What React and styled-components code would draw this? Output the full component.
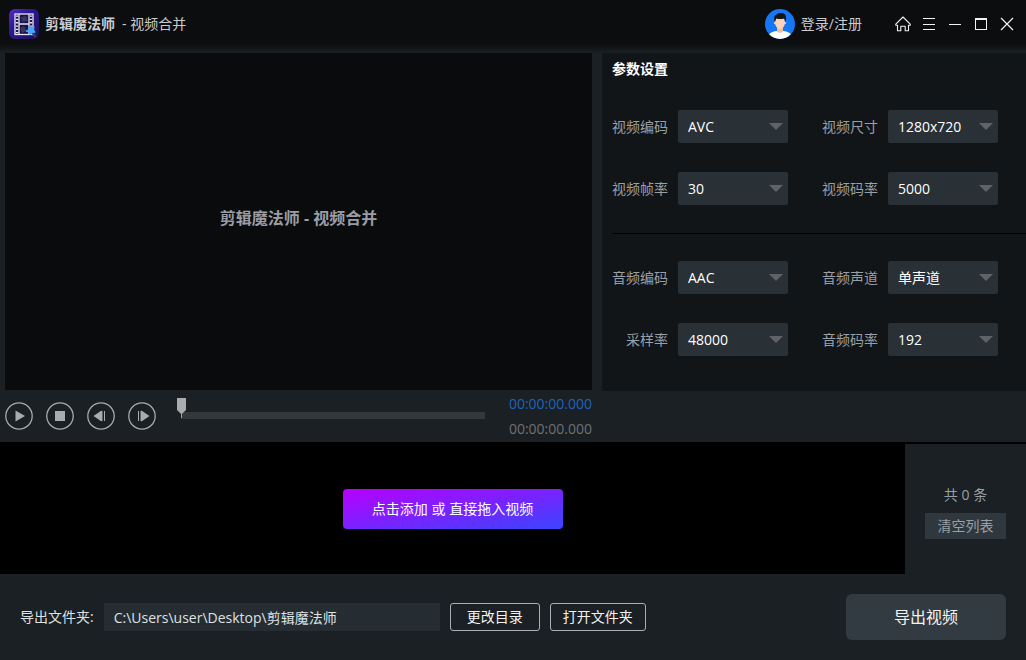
import React, { useId } from 'react';
import styled, { createGlobalStyle } from 'styled-components';

const VIDEO_FIELDS = [
  { label: '视频编码', options: ['AVC', 'HEVC'] },
  { label: '视频尺寸', options: ['1280x720', '1920x1080'] },
  { label: '视频帧率', options: ['30', '25', '60'] },
  { label: '视频码率', options: ['5000', '8000'] },
];

const AUDIO_FIELDS = [
  { label: '音频编码', options: ['AAC', 'MP3'] },
  { label: '音频声道', options: ['单声道', '立体声'] },
  { label: '采样率', options: ['48000', '44100'] },
  { label: '音频码率', options: ['192', '128'] },
];

function Field({ label, options }) {
  const id = useId();

  return (
    <>
      <FieldLabel htmlFor={id}>{label}</FieldLabel>
      <SelectBox>
        <Select id={id}>
          {options.map((option) => (
            <option key={option}>{option}</option>
          ))}
        </Select>
      </SelectBox>
    </>
  );
}

function Logo() {
  return (
    <svg width='30' height='30' viewBox='0 0 30 30' aria-hidden='true'>
      <defs>
        <linearGradient id='logo-bg' x1='0' y1='0' x2='1' y2='1'>
          <stop offset='0' stopColor='#5a2cc4' />
          <stop offset='0.35' stopColor='#2e1a96' />
          <stop offset='1' stopColor='#1a1152' />
        </linearGradient>
      </defs>
      <rect width='30' height='30' rx='6' fill='url(#logo-bg)' />
      <rect x='6' y='5' width='18' height='20.500' fill='#17134a' stroke='#e6e3f2' strokeWidth='1.300' />
      <path d='M10 5v20.500M20 5v20.500M10 15h10' stroke='#e6e3f2' strokeWidth='1.300' fill='none' />
      <path d='M8 6.500v18M22 6.500v18' stroke='#e6e3f2' strokeWidth='2.600' strokeDasharray='1.300 2' />
      <path d='M12 8l5-1 2 5-6 1zM11 19l4-2 3 5-5 2z' fill='#3b3557' />
      <path d='M23 23l3.500 5' stroke='#3b3f6b' strokeWidth='2.200' />
      <path d='M20.500 17l1.500 1.800 3.200-1-.6 3 1.600 2.400-3.200.2-1.800 2.400-1.200-2.800-3-.7 2.500-1.800z' fill='#4ea4fb' stroke='#4ea4fb' strokeLinejoin='round' />
    </svg>
  );
}

function Avatar() {
  return (
    <svg width='30' height='30' viewBox='0 0 30 30' aria-hidden='true'>
      <defs>
        <clipPath id='avatar-clip'>
          <circle cx='15' cy='15' r='15' />
        </clipPath>
      </defs>
      <g clipPath='url(#avatar-clip)'>
        <rect width='30' height='30' fill='#1677f5' />
        <path d='M2 30c1-5 4-7.500 10-8h6c6 .5 9 3 10 8z' fill='#fff' />
        <path d='M12 18h6v4.500c-1.500 1.800-4.500 1.800-6 0z' fill='#f0bfa2' />
        <ellipse cx='15' cy='13.500' rx='5' ry='6.500' fill='#fbd3ba' />
        <circle cx='9.800' cy='14' r='1' fill='#fbd3ba' />
        <circle cx='20.200' cy='14' r='1' fill='#fbd3ba' />
        <path d='M9.800 13c-1.500-5 0-7 2-7.500 2-2 7-2 8.500.5 1.500 1.500.8 4.500-.1 7l-.9-3.500c-3 .8-6 .6-8 0z' fill='#151515' />
      </g>
    </svg>
  );
}

function WindowIcon({ children }) {
  return (
    <svg width='16' height='16' viewBox='0 0 16 16' fill='none' stroke='currentColor' aria-hidden='true'>
      {children}
    </svg>
  );
}

function PlayerButton({ label, children }) {
  return (
    <RoundButton aria-label={label}>
      <svg width='28' height='28' viewBox='0 0 28 28' fill='#a9abac' aria-hidden='true'>
        <circle cx='14' cy='14' r='13.200' fill='none' stroke='#a9abac' strokeWidth='1.300' />
        {children}
      </svg>
    </RoundButton>
  );
}

function App() {
  return (
    <Page>
      <GlobalStyle />
      <TitleBar>
        <Logo />
        <AppTitle>
          <strong>剪辑魔法师</strong>
          <span>- 视频合并</span>
        </AppTitle>
        <LoginButton>
          <Avatar />
          登录/注册
        </LoginButton>
        <WindowButtons>
          <WindowButton aria-label='主页'>
            <WindowIcon>
              <path
                d='M.8 8.200L8 1l7.200 7.200v1h-1.700v5.600h-3.300v-4.600h-4.400v4.600H2.500V9.200H.8z'
                strokeWidth='1.100'
                strokeLinejoin='round'
              />
            </WindowIcon>
          </WindowButton>
          <WindowButton aria-label='菜单'>
            <WindowIcon>
              <path d='M2 2.500h12M2 8.500h12M2 13.500h12' />
            </WindowIcon>
          </WindowButton>
          <WindowButton aria-label='最小化'>
            <WindowIcon>
              <path d='M2 8.500h12' />
            </WindowIcon>
          </WindowButton>
          <WindowButton aria-label='最大化'>
            <WindowIcon>
              <path d='M2.500 3v11M13.500 3v11M2 13.500h12' />
              <path d='M2 3h12' strokeWidth='2' />
            </WindowIcon>
          </WindowButton>
          <WindowButton aria-label='关闭'>
            <WindowIcon>
              <path d='M2 2l12 12M14 2L2 14' strokeWidth='1.200' />
            </WindowIcon>
          </WindowButton>
        </WindowButtons>
      </TitleBar>

      <Workspace>
        <PreviewColumn>
          <Preview>剪辑魔法师 - 视频合并</Preview>
          <Player>
            <PlayerButtons>
              <PlayerButton label='播放'>
                <path d='M10.500 8.500l9.500 5.500-9.500 5.500z' />
              </PlayerButton>
              <PlayerButton label='停止'>
                <rect x='9' y='9' width='10' height='10' />
              </PlayerButton>
              <PlayerButton label='上一帧'>
                <path d='M6.500 14l8-5.500v11zM14.500 9h1v10h-1zM17 9h1v10h-1z' />
              </PlayerButton>
              <PlayerButton label='下一帧'>
                <path d='M21.500 14l-8-5.500v11zM12.500 9h1v10h-1zM10 9h1v10h-1z' />
              </PlayerButton>
            </PlayerButtons>
            <Seek type='range' min='0' max='100' defaultValue='0' aria-label='播放进度' />
            <Times>
              <Time $active>00:00:00.000</Time>
              <Time>00:00:00.000</Time>
            </Times>
          </Player>
        </PreviewColumn>
        <Settings>
          <SettingsTitle>参数设置</SettingsTitle>
          <FieldGrid>
            {VIDEO_FIELDS.map((field) => (
              <Field key={field.label} {...field} />
            ))}
          </FieldGrid>
          <Divider />
          <FieldGrid>
            {AUDIO_FIELDS.map((field) => (
              <Field key={field.label} {...field} />
            ))}
          </FieldGrid>
        </Settings>
      </Workspace>

      <ListRow>
        <DropZone>
          <AddButton>点击添加 或 直接拖入视频</AddButton>
        </DropZone>
        <ListSide>
          <span>共 0 条</span>
          <ClearButton>清空列表</ClearButton>
        </ListSide>
      </ListRow>

      <Footer>
        <label htmlFor='export-folder'>导出文件夹:</label>
        <PathInput id='export-folder' type='text' defaultValue='C:\Users\user\Desktop\剪辑魔法师' />
        <OutlineButton>更改目录</OutlineButton>
        <OutlineButton>打开文件夹</OutlineButton>
        <ExportButton>导出视频</ExportButton>
      </Footer>
    </Page>
  );
}

const GlobalStyle = createGlobalStyle`
  * {
    box-sizing: border-box;
  }

  body {
    margin: 0;
    background: #1a2023;
  }

  body, button, input, select {
    font-family: 'Open Sans', 'Noto Sans CJK SC', sans-serif;
    font-size: 14px;
    line-height: 20px;
  }

  button {
    padding: 0;
    border: none;
    background: none;
    color: inherit;
    cursor: pointer;
  }

  svg {
    display: block;
  }
`;

const Page = styled.div`
  display: flex;
  flex-direction: column;
  min-height: 100vh;
  background: #1a2023;
  color: #dfe1e3;
`;

const TitleBar = styled.header`
  display: flex;
  align-items: center;
  height: 53px;
  padding: 0 6px 5px 9px;
  background: linear-gradient(#0b0d0f 44px, #1a2023 53px);
`;

const AppTitle = styled.div`
  display: flex;
  gap: 7px;
  margin-left: 6px;
  color: #c9cccf;
`;

const LoginButton = styled.button`
  display: flex;
  align-items: center;
  gap: 6px;
  margin-left: auto;
  color: #c9cccf;
`;

const WindowButtons = styled.div`
  display: flex;
  margin-left: 28px;
`;

const WindowButton = styled.button`
  display: flex;
  align-items: center;
  justify-content: center;
  width: 26px;
  height: 26px;
  color: #f2f2f2;

  &:hover {
    background: #293036;
  }
`;

const Workspace = styled.main`
  display: flex;
  flex: 1;
  gap: 10px;
`;

const PreviewColumn = styled.section`
  display: flex;
  flex: 1;
  flex-direction: column;
  padding-left: 5px;
`;

const Preview = styled.div`
  display: flex;
  flex: 1;
  align-items: center;
  justify-content: center;
  padding-bottom: 8px;
  background: #0a0b0c;
  color: #9a9da6;
  font-size: 16px;
  font-weight: bold;
`;

const Player = styled.div`
  display: flex;
  align-items: center;
  height: 52px;
`;

const PlayerButtons = styled.div`
  display: flex;
  gap: 13px;
`;

const RoundButton = styled.button`
  width: 28px;
  height: 28px;
  border-radius: 50%;

  &:hover {
    background: #293036;
  }
`;

const Seek = styled.input`
  appearance: none;
  flex: 1;
  min-width: 0;
  height: 36px;
  margin: 0 24px 0 21px;
  background: none;
  cursor: pointer;

  &::-webkit-slider-runnable-track {
    height: 36px;
    background: linear-gradient(#35383a, #35383a) 4px 14px / 100% 7px no-repeat;
  }

  &::-webkit-slider-thumb {
    appearance: none;
    width: 9px;
    height: 20px;
    background: #a9abac;
    clip-path: polygon(0 0, 100% 0, 100% 60%, 55% 80%, 55% 100%, 45% 100%, 45% 80%, 0 60%);
  }
`;

const Times = styled.div`
  line-height: 25px;
`;

const Time = styled.div`
  color: ${(props) => (props.$active ? '#1e63bd' : '#6f7173')};
`;

const Settings = styled.section`
  width: 424px;
  margin-bottom: 51px;
  padding: 6px 0 35px 10px;
  background: #121517;
`;

const SettingsTitle = styled.h2`
  margin: 0 0 31px;
  color: #fff;
  font-size: 14px;
  line-height: 20px;
`;

const FieldGrid = styled.div`
  display: grid;
  grid-template-columns: 56px 110px 80px 110px;
  gap: 29px 10px;
  align-items: center;
`;

const FieldLabel = styled.label`
  color: #9a9fa6;
  text-align: right;
`;

const SelectBox = styled.div`
  position: relative;

  &::after {
    content: '';
    position: absolute;
    top: 13px;
    right: 5px;
    border: 7px solid transparent;
    border-top-color: #5f6366;
    border-bottom: none;
    pointer-events: none;
  }
`;

const Select = styled.select`
  display: block;
  appearance: none;
  width: 100%;
  height: 33px;
  padding: 0 10px;
  border: none;
  border-radius: 2px;
  background: #293036;
  color: #fff;
`;

const Divider = styled.hr`
  height: 1px;
  margin: 28px 0 27px;
  border: none;
  background: #000;
`;

const ListRow = styled.section`
  display: flex;
  border-top: 2px solid #000;
`;

const DropZone = styled.div`
  display: flex;
  flex: 1;
  align-items: center;
  justify-content: center;
  height: 130px;
  background: #000;
`;

const AddButton = styled.button`
  width: 220px;
  height: 40px;
  border-radius: 4px;
  background: linear-gradient(to bottom right, #b800ff, #7a22ff 50%, #3a45ff);
  color: #fff;
`;

const ListSide = styled.div`
  display: flex;
  flex-direction: column;
  align-items: center;
  justify-content: center;
  gap: 8px;
  width: 121px;
  padding-top: 6px;
  color: #9a9fa6;
`;

const ClearButton = styled.button`
  width: 81px;
  height: 26px;
  background: #2f383e;
`;

const Footer = styled.footer`
  display: flex;
  align-items: center;
  gap: 10px;
  height: 86px;
  padding: 0 20px;
`;

const PathInput = styled.input`
  width: 336px;
  height: 28px;
  padding: 0 10px;
  border: none;
  background: #252d32;
  color: #dfe1e3;
`;

const OutlineButton = styled.button`
  min-width: 90px;
  height: 28px;
  padding: 0 12px;
  border: 1px solid #a9afb4;
  border-radius: 3px;
  color: #f2f2f2;
`;

const ExportButton = styled.button`
  width: 160px;
  height: 46px;
  margin-left: auto;
  border-radius: 6px;
  background: #323b41;
  color: #f2f2f2;
  font-size: 16px;
`;

export default App;
